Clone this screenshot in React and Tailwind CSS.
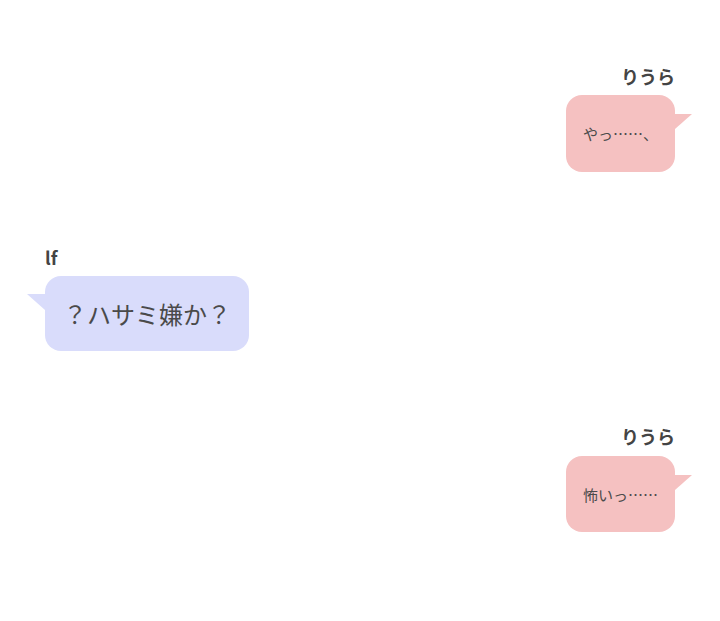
const FONT = 'font-["Noto_Sans_CJK_JP","Noto_Sans",sans-serif]';

const Tail = ({ side, color }) =>
  side === 'right' ? (
    <svg className="absolute top-[19px] right-[-17px]" width="19" height="17" viewBox="0 0 19 17">
      <polygon points="0,0 19,0 2,15 0,15" fill={color} />
    </svg>
  ) : (
    <svg className="absolute top-[18px] left-[-18px]" width="20" height="17" viewBox="0 0 20 17">
      <polygon points="0,0 20,0 20,16 18,16" fill={color} />
    </svg>
  );

const Message = ({ name, text, side, height, className = '', gap = 'mt-[6px]' }) => {
  const right = side === 'right';
  const color = right ? '#f5c1c1' : '#d9dcfb';
  return (
    <div className={`flex flex-col ${right ? 'items-end' : 'items-start'} ${className}`}>
      <div className="h-[25px] leading-[25px] text-[18px] font-bold text-[#444]">{name}</div>
      <div
        className={`relative ${gap} flex items-center rounded-[16px] text-[#4a4a4a] ${
          right ? 'bg-[#f5c1c1] px-[17px] text-[15px]' : 'bg-[#d9dcfb] px-[18px] text-[24px]'
        } ${height}`}
      >
        <Tail side={side} color={color} />
        <span className="whitespace-nowrap leading-none">{text}</span>
      </div>
    </div>
  );
};

export default function App() {
  return (
    <div className={`w-[720px] h-[621px] bg-white overflow-hidden px-[45px] pt-[64px] ${FONT}`}>
      <div className="flex flex-col">
        <Message name="りうら" text="やっ……、" side="right" height="h-[77px]" />
        <Message name="lf" text="？ハサミ嫌か？" side="left" height="h-[75px]" className="mt-[73px]" />
        <Message name="りうら" text="怖いっ……" side="right" height="h-[76px]" className="mt-[73px]" gap="mt-[7px]" />
      </div>
    </div>
  );
}
